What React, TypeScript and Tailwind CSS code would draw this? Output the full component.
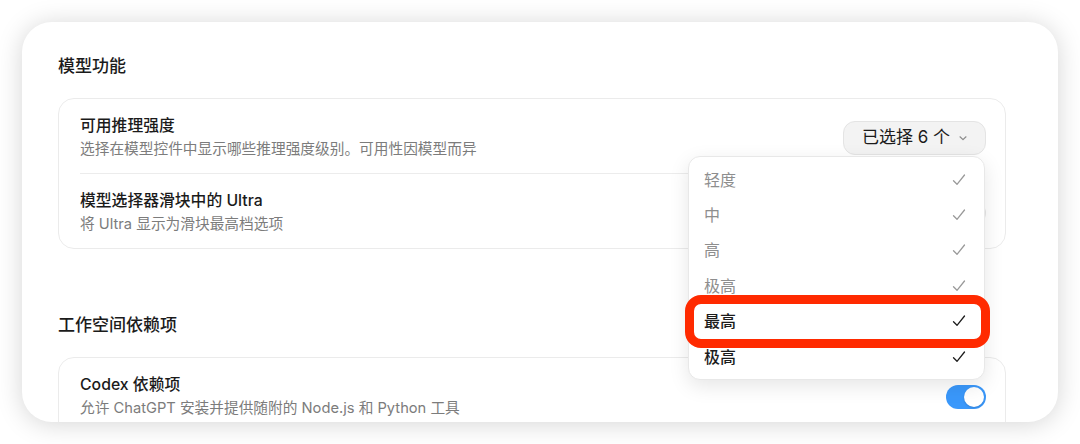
import React from 'react';

const font = { fontFamily: 'Inter, "Noto Sans CJK SC", sans-serif' };

const levels = [
  { label: '轻度', active: false },
  { label: '中', active: false },
  { label: '高', active: false },
  { label: '极高', active: false },
  { label: '最高', active: true },
  { label: '极高', active: true },
];

function Check({ dark }: { dark: boolean }) {
  return (
    <svg width="16" height="16" viewBox="0 0 16 16" fill="none" stroke={dark ? '#1c1c1c' : '#9a9a9a'} strokeWidth="1.3" strokeLinecap="round" strokeLinejoin="round">
      <path d="M2.5 8.8 L6 12.3 L13.5 3" />
    </svg>
  );
}

function Chevron() {
  return (
    <svg width="10" height="10" viewBox="0 0 10 10" fill="none" stroke="#8a8a8a" strokeWidth="1.2" strokeLinecap="round" strokeLinejoin="round">
      <path d="M2 3.8 L5 6.6 L8 3.8" />
    </svg>
  );
}

function Toggle({ on }: { on: boolean }) {
  return (
    <div className={`flex h-[24px] w-[40px] items-center rounded-full p-[2px] ${on ? 'justify-end bg-[#3a98fb]' : 'justify-start bg-[#e6e6e6]'}`}>
      <div className="h-[20px] w-[20px] rounded-full bg-white shadow-[0_1px_2px_rgba(0,0,0,0.15)]" />
    </div>
  );
}

function Row({ title, desc, right, divider }: { title: string; desc: string; right?: React.ReactNode; divider?: boolean }) {
  return (
    <div className={`flex items-center justify-between pt-[17px] pb-[14px] ${divider ? 'border-b border-[#ececec]' : ''}`}>
      <div className="flex flex-col gap-[3px]">
        <div className="text-[15.8px] leading-[20px] font-medium text-[#1b1b1b]">{title}</div>
        <div className="text-[14.7px] leading-[20px] text-[#7c7c7c]">{desc}</div>
      </div>
      {right}
    </div>
  );
}

export default function App() {
  return (
    <div className="h-[444px] w-[1080px] overflow-hidden bg-white p-[22px]" style={font}>
      <div className="relative h-[400px] w-[1036px] overflow-hidden rounded-[30px] bg-white pl-[36px] pr-[52px] pt-[33px] shadow-[0_2px_26px_rgba(0,0,0,0.17)]">
        <div className="text-[17px] leading-[22px] font-medium text-[#1b1b1b]">模型功能</div>

        <div className="mt-[21px] rounded-[16px] border border-[#ebebeb] px-[21px]">
          <Row
            title="可用推理强度"
            desc="选择在模型控件中显示哪些推理强度级别。可用性因模型而异"
            divider
            right={
              <div className="-mr-[2px] flex h-[34px] items-center gap-[8px] rounded-[12px] border border-[#e4e4e4] bg-[#f3f3f3] pl-[18px] pr-[17px] text-[17px] text-[#1b1b1b]">
                <span>已选择 6 个</span>
                <Chevron />
              </div>
            }
          />
          <Row title="模型选择器滑块中的 Ultra" desc="将 Ultra 显示为滑块最高档选项" right={<div className="-mr-[2px]"><Toggle on={false} /></div>} />
        </div>

        <div className="mt-[65px] text-[17px] leading-[22px] font-medium text-[#1b1b1b]">工作空间依赖项</div>

        <div className="mt-[21px] h-[120px] rounded-[16px] border border-[#ebebeb] px-[21px]">
          <Row
            title="Codex 依赖项"
            desc="允许 ChatGPT 安装并提供随附的 Node.js 和 Python 工具"
            right={<div className="-mr-[2px]"><Toggle on /></div>}
          />
        </div>

        {/* dropdown menu */}
        <div className="absolute left-[666px] top-[134px] w-[297px] rounded-[12px] border border-[#e8e8e8] bg-white py-[5px] shadow-[0_6px_20px_rgba(0,0,0,0.1)]">
          {levels.map((l, i) => (
            <div key={i} className="flex h-[35.4px] items-center justify-between pl-[15px] pr-[17px]">
              <span className={`text-[16px] ${l.active ? 'font-medium text-[#1c1c1c]' : 'text-[#8e8e8e]'}`}>{l.label}</span>
              <Check dark={l.active} />
            </div>
          ))}
        </div>

        {/* red highlight */}
        <div className="absolute left-[663px] top-[273px] h-[53px] w-[305px] rounded-[16px] border-[9px] border-[#ff2a00]" />
      </div>
    </div>
  );
}
